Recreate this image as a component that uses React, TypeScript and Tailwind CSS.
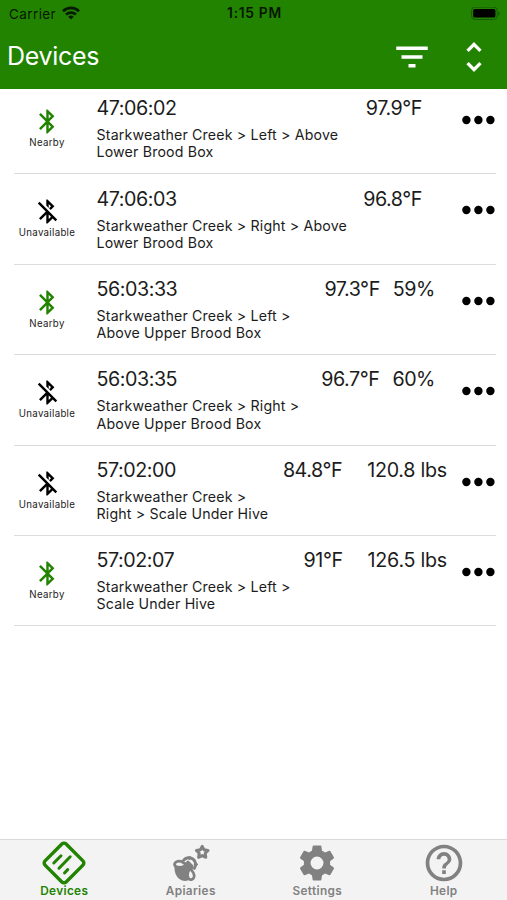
import {
  MdBluetooth,
  MdBluetoothDisabled,
  MdFilterList,
  MdHelpOutline,
  MdUnfoldMore,
} from "react-icons/md";

type Device = {
  id: string;
  nearby: boolean;
  lines: [string, string];
  temp: string;
  extra?: string;
};

const DEVICES: Device[] = [
  { id: "47:06:02", nearby: true, lines: ["Starkweather Creek > Left > Above", "Lower Brood Box"], temp: "97.9°F" },
  { id: "47:06:03", nearby: false, lines: ["Starkweather Creek > Right > Above", "Lower Brood Box"], temp: "96.8°F" },
  { id: "56:03:33", nearby: true, lines: ["Starkweather Creek > Left >", "Above Upper Brood Box"], temp: "97.3°F", extra: "59%" },
  { id: "56:03:35", nearby: false, lines: ["Starkweather Creek > Right >", "Above Upper Brood Box"], temp: "96.7°F", extra: "60%" },
  { id: "57:02:00", nearby: false, lines: ["Starkweather Creek >", "Right > Scale Under Hive"], temp: "84.8°F", extra: "120.8 lbs" },
  { id: "57:02:07", nearby: true, lines: ["Starkweather Creek > Left >", "Scale Under Hive"], temp: "91°F", extra: "126.5 lbs" },
];

function StatusBar() {
  return (
    <div className="grid h-7 grid-cols-3 items-center pl-[9px] pr-[7px] text-[13.5px] leading-none text-black/85">
      <div className="flex items-center gap-[6px]">
        <span className="pt-px tracking-[0.4px]">Carrier</span>
        <svg className="-mt-[2px]" width="18" height="14" viewBox="0 0 18 14" fill="none" stroke="#061c00" strokeWidth="2.6">
          <path d="M1 5.2a11.4 11.4 0 0 1 16 0" />
          <path d="M4 8.6a7.2 7.2 0 0 1 10 0" />
          <path d="M9 13.6 6.2 10.8a4 4 0 0 1 5.6 0Z" fill="#061c00" stroke="none" />
        </svg>
      </div>
      <span className="text-center text-[13.8px] font-semibold tracking-[0.7px]">1:15 PM</span>
      <svg className="justify-self-end" width="30" height="14" viewBox="0 0 30 14">
        <rect x="1.6" y="0.1" width="25.6" height="12.4" rx="3.4" fill="none" stroke="#165b00" strokeWidth="1" />
        <rect x="3.2" y="2" width="22.2" height="8.6" rx="1.6" fill="#000" />
        <path d="M28.4 4.5v4c1-.4 1.3-1.1 1.3-2s-.3-1.6-1.3-2Z" fill="#165b00" />
      </svg>
    </div>
  );
}

function DeviceRow({ device }: { device: Device }) {
  const Icon = device.nearby ? MdBluetooth : MdBluetoothDisabled;
  return (
    <li className="ml-[14px] mr-[11px] flex h-[90.4px] border-b border-[#dcdcdc] text-[#1c1c1c]">
      <div className="flex w-[66px] flex-col items-center pt-[23px]">
        <Icon className={device.nearby ? "size-[29px] text-[#218300]" : "size-[29px] text-black"} />
        <span className="mt-px text-[9.7px] leading-3 tracking-[0.3px]">{device.nearby ? "Nearby" : "Unavailable"}</span>
      </div>
      <div className="min-w-0 flex-1 pl-[16.5px] pt-[12.2px]">
        <div className="flex items-center text-[19.7px] leading-6 tracking-[-0.45px]">
          <span className="flex-1">{device.id}</span>
          <span>{device.temp}</span>
          <Extra value={device.extra} />
        </div>
        <p className="mt-[6px] whitespace-nowrap text-[14.2px] leading-[17.2px] tracking-[0.16px]">
          {device.lines[0]}
          <br />
          {device.lines[1]}
        </p>
      </div>
      <svg className="ml-[15px] mt-[31px] shrink-0" width="34" height="10" viewBox="0 0 34 10" fill="#000">
        <circle cx="4.4" cy="5" r="4.2" />
        <circle cx="16.4" cy="5" r="4.2" />
        <circle cx="28.4" cy="5" r="4.2" />
      </svg>
    </li>
  );
}

function Extra({ value }: { value?: string }) {
  if (!value) return <span className="w-[25px]" />;
  if (value.endsWith("%")) return <span className="mr-3 ml-[13px]">{value}</span>;
  return <span className="ml-[25px] tracking-[-0.25px]">{value}</span>;
}

function DiamondIcon() {
  return (
    <svg width="46" height="46" viewBox="0 0 46 46" fill="none" stroke="#218300" strokeLinecap="round">
      <rect x="8.1" y="8.1" width="29.8" height="29.8" rx="3" strokeWidth="3.4" transform="rotate(45 23 23)" />
      <path d="m12.8 23 7.2-7.2M18 28.3l11.2-11.5M23.5 33l3.2-3.4" strokeWidth="3" />
    </svg>
  );
}

function BeeIcon() {
  return (
    <svg width="38" height="38" viewBox="0 0 38 38" fill="none" stroke="#818181" strokeLinejoin="round" strokeLinecap="round">
      <path d="m30.2 2.4 1.8 3.4 4 .7-2.8 2.8.6 4-3.6-1.7-3.6 1.7.6-4-2.8-2.8 4-.7Z" strokeWidth="3" />
      <path d="M11.5 16.4a6.2 6.2 0 0 1 10.8 8" strokeWidth="3" />
      <path d="m13 20 3-2.5 4.5 4.5-1 4.5Z" fill="#818181" strokeWidth="1.8" />
      <path d="M17.4 15.2 18 12.8M22.6 20.8l2.6-.5" strokeWidth="1.8" />
      <path d="M3.5 23 14 20.5 18 25v9.5C11 38.5 3 33.5 3.5 23Z" fill="#818181" strokeWidth="2" />
      <path d="M14 21.5c-2-3-5.500-4.600-8.500-4.200-3 .6-4 3.800-1.500 5.200 2.600 1.300 6.300 1 10-1Z" fill="#f3f3f3" strokeWidth="2.8" />
      <path d="M17.6 24.8c-2 3.400-2.600 7.200-1.200 9.500 1.400 2.200 4.800 1.600 5.600-1.200.6-2.600-1.200-6.200-4.400-8.300Z" fill="#f3f3f3" strokeWidth="2.8" />
    </svg>
  );
}

function GearIcon() {
  return (
    <svg width="42" height="42" viewBox="0 0 24 24" fill="currentColor">
      <path d="M19.43 12.98c.04-.32.07-.64.07-.98s-.03-.66-.07-.98l2.11-1.65c.19-.15.24-.42.12-.64l-2-3.46c-.12-.22-.39-.3-.61-.22l-2.49 1c-.52-.4-1.08-.73-1.69-.98l-.38-2.65C14.46 2.18 14.25 2 14 2h-4c-.25 0-.46.18-.49.42l-.38 2.65c-.61.25-1.17.59-1.69.98l-2.49-1c-.23-.09-.49 0-.61.22l-2 3.46c-.13.22-.07.49.12.64l2.11 1.65c-.04.32-.07.65-.07.98s.03.66.07.98l-2.11 1.65c-.19.15-.24.42-.12.64l2 3.46c.12.22.39.3.61.22l2.49-1c.52.4 1.08.73 1.69.98l.38 2.65c.03.24.24.42.49.42h4c.25 0 .46-.18.49-.42l.38-2.65c.61-.25 1.17-.59 1.69-.98l2.49 1c.23.09.49 0 .61-.22l2-3.46c.12-.22.07-.49-.12-.64l-2.11-1.65zM12 15.7a3.7 3.7 0 1 1 0-7.4 3.7 3.7 0 0 1 0 7.4z" />
    </svg>
  );
}

const TABS = [
  { label: "Devices", icon: <DiamondIcon /> },
  { label: "Apiaries", icon: <BeeIcon /> },
  { label: "Settings", icon: <GearIcon /> },
  { label: "Help", icon: <MdHelpOutline className="size-11" /> },
];

export default function App() {
  return (
    <div className="flex h-[900px] w-[507px] flex-col overflow-hidden bg-white font-[Inter,sans-serif]">
      <header className="h-[88.5px] shrink-0 bg-[#218300]">
        <StatusBar />
        <div className="flex h-[58px] items-center pl-[7px] pr-[13px] text-white">
          <h1 className="flex-1 text-[25px] tracking-[-0.3px]">Devices</h1>
          <MdFilterList className="mr-[21.5px] size-[42px]" />
          <MdUnfoldMore className="size-10" />
        </div>
      </header>
      <ul className="-mt-[4.5px] flex-1">
        {DEVICES.map((d) => (
          <DeviceRow key={d.id} device={d} />
        ))}
      </ul>
      <nav className="grid h-[61px] grid-cols-4 border-t border-[#dadada] bg-[#f3f3f3] pl-px">
        {TABS.map((tab, i) => (
          <div
            key={tab.label}
            className={
              i === 0
                ? "flex flex-col items-center text-[#218300]"
                : "flex flex-col items-center text-[#818181]"
            }
          >
            <div className="flex h-[46px] items-center">{tab.icon}</div>
            <span className="-mt-[2px] text-[11.8px] font-semibold leading-[14px] tracking-[0.35px]">{tab.label}</span>
          </div>
        ))}
      </nav>
    </div>
  );
}
